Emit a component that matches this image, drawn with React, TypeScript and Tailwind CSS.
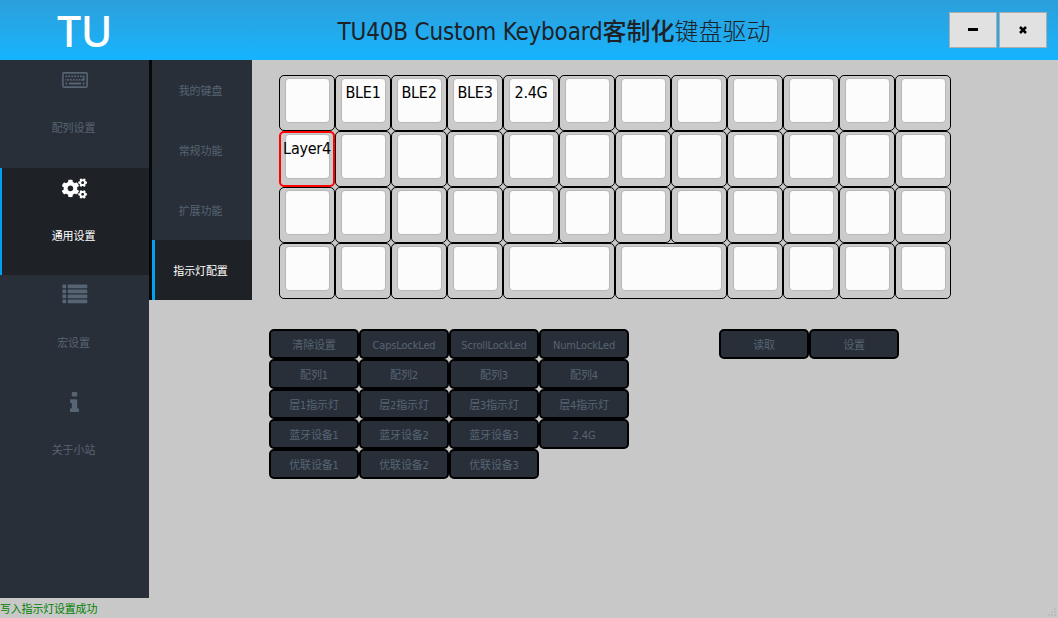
import type { ReactNode } from "react";
import { FaCogs } from "react-icons/fa";

const latin = "font-['DejaVu_Sans_Condensed','DejaVu_Sans','Noto_Sans_CJK_SC',sans-serif] [font-stretch:condensed]";

function KeyboardIcon() {
  return (
    <svg width="26" height="16" viewBox="0 0 26 16" fill="currentColor">
      <rect x="0.9" y="0.9" width="24.2" height="14.2" rx="1" fill="none" stroke="currentColor" strokeWidth="1.6" />
      {[3.5, 6.4, 9.3, 12.2, 15.1, 18].map((x) => (
        <rect key={x} x={x} y="3.4" width="1.8" height="1.8" />
      ))}
      {[5, 7.9, 10.8, 13.7, 16.6].map((x) => (
        <rect key={x} x={x} y="6.9" width="1.8" height="1.8" />
      ))}
      <path d="M20.7 3.4h1.8v5.3h-3.3V6.9h1.5zM3.5 6.9h.9v1.8h-.9zM3.5 10.6h1.8v1.8H3.5zM7 10.6h12v1.8H7zM20.7 10.6h1.8v1.8h-1.8z" />
    </svg>
  );
}

function ListIcon() {
  return (
    <svg width="26" height="20" viewBox="0 0 26 20" fill="currentColor" className="mb-0.5">
      {[0.4, 5.4, 10.4, 15.4].map((y) => (
        <g key={y}>
          <rect x="0.4" y={y} width="3.8" height="3.8" rx="0.6" />
          <rect x="5.7" y={y} width="19.6" height="3.8" rx="0.6" />
        </g>
      ))}
    </svg>
  );
}

function InfoIcon() {
  return (
    <svg width="9" height="20" viewBox="0 128 640 1408" fill="currentColor">
      <path d="M640 1344v128q0 26-19 45t-45 19h-512q-26 0-45-19t-19-45v-128q0-26 19-45t45-19h64v-384h-64q-26 0-45-19t-19-45v-128q0-26 19-45t45-19h384q26 0 45 19t19 45v576h64q26 0 45 19t19 45zM512 192v192q0 26-19 45t-45 19h-256q-26 0-45-19t-19-45v-192q0-26 19-45t45-19h256q26 0 45 19t19 45z" />
    </svg>
  );
}

function NavItem({ icon, label, active, size }: { icon: ReactNode; label: string; active?: boolean; size: string }) {
  return (
    <div
      className={`flex flex-col items-center ${size} ${
        active ? "border-l-2 border-[#00a2f2] bg-[#1e2126] pr-1 text-white" : "bg-[#292f39] pr-0.5 text-[#566473]"
      }`}
    >
      <div className="ml-0.5 flex h-10 items-center">{icon}</div>
      <div className="mt-[21px] h-4 text-[11px] leading-4 tracking-[-0.1px]">{label}</div>
    </div>
  );
}

function SubItem({ label, active }: { label: string; active?: boolean }) {
  return (
    <div
      className={`flex h-15 items-center justify-center border-l-3 pt-1 pr-1.5 text-[11px] tracking-[-0.1px] ${
        active ? "border-[#00a2f2] bg-[#1e2126] text-white" : "border-[#292f39] bg-[#292f39] text-[#566473]"
      }`}
    >
      {label}
    </div>
  );
}

type KeyDef = { label?: string; wide?: boolean; selected?: boolean };

const rows: KeyDef[][] = [
  [{}, { label: "BLE1" }, { label: "BLE2" }, { label: "BLE3" }, { label: "2.4G" }, {}, {}, {}, {}, {}, {}, {}],
  [{ label: "Layer4", selected: true }, {}, {}, {}, {}, {}, {}, {}, {}, {}, {}, {}],
  [{}, {}, {}, {}, {}, {}, {}, {}, {}, {}, {}, {}],
  [{}, {}, {}, {}, { wide: true }, { wide: true }, {}, {}, {}, {}],
];

function Key({ label, wide, selected }: KeyDef) {
  return (
    <div
      className={`relative h-14 rounded-[5px] bg-[#cbcbcb] ${wide ? "col-span-2" : ""} ${
        selected ? "border-2 border-[#ff0000] pt-px pr-[3px] pl-1" : "border border-black pt-0.5 pr-1 pl-[5px]"
      }`}
    >
      <div className="h-[45px] rounded-[4px] border border-[#b8b8b8] bg-[#fcfcfc]" />
      {label && (
        <span
          className={`absolute inset-x-0 flex justify-center text-base leading-5 tracking-[-0.25px] whitespace-nowrap text-black ${
            selected ? "top-1.5" : "top-[7px]"
          }`}
        >
          {label}
        </span>
      )}
    </div>
  );
}

const commands = [
  "清除设置", "CapsLockLed", "ScrollLockLed", "NumLockLed",
  "配列1", "配列2", "配列3", "配列4",
  "层1指示灯", "层2指示灯", "层3指示灯", "层4指示灯",
  "蓝牙设备1", "蓝牙设备2", "蓝牙设备3", "2.4G",
  "优联设备1", "优联设备2", "优联设备3",
];

function Command({ label }: { label: string }) {
  return (
    <button className="flex h-[30px] w-[90px] items-center justify-center rounded-[5px] border-2 border-black bg-[#292f39] pt-1 text-[11px] tracking-[-0.15px] whitespace-nowrap text-[#566473]">
      {label}
    </button>
  );
}

export default function App() {
  return (
    <div className={`flex h-[618px] w-[1058px] flex-col overflow-hidden bg-[#c8c8c8] ${latin}`}>
      <header className="flex h-15 shrink-0 items-center bg-linear-to-b from-[#2b9fda] to-[#14b4ff]">
        <div className="w-[167px] pl-0.5 text-center font-['Noto_Sans',sans-serif] text-[43px] leading-none font-medium tracking-[-0.5px] text-white">
          TU
        </div>
        <h1 className="flex flex-1 items-center justify-center pt-1 pr-2 text-2xl leading-8 whitespace-nowrap text-[#1e2126]">
          <span className="tracking-[-0.2px]">TU40B Custom Keyboard</span>
          <span className="pb-1 font-['Noto_Sans_CJK_SC',sans-serif] font-medium">客制化</span>
          <span className="pb-1 font-['Noto_Sans_CJK_SC',sans-serif] font-light">键盘驱动</span>
        </h1>
        <div className="flex gap-0.5 pr-[11px]">
          <button className="flex h-9 w-12 items-center justify-center border border-[#adadad] bg-[#e1e1e1]">
            <svg width="10" height="3" className="mb-0.5"><rect width="10" height="3" /></svg>
          </button>
          <button className="flex h-9 w-12 items-center justify-center border border-[#adadad] bg-[#e1e1e1]">
            <svg width="8" height="8" viewBox="0 0 8 8"><path d="M1 1l6 6M7 1L1 7" stroke="black" strokeWidth="2.5" /></svg>
          </button>
        </div>
      </header>
      <div className="flex min-h-0 flex-1">
        <nav className="flex w-[149px] flex-col bg-[#292f39]">
          <NavItem size="h-[108px]" icon={<KeyboardIcon />} label="配列设置" />
          <NavItem size="h-[107px]" icon={<FaCogs size={25} />} label="通用设置" active />
          <NavItem size="h-[107px]" icon={<ListIcon />} label="宏设置" />
          <NavItem size="h-[108px]" icon={<InfoIcon />} label="关于小站" />
        </nav>
        <nav className="h-60 w-[103px] border-l-3 border-[#07080a]">
          <SubItem label="我的键盘" />
          <SubItem label="常规功能" />
          <SubItem label="扩展功能" />
          <SubItem label="指示灯配置" active />
        </nav>
        <main className="flex-1 pt-[15px] pl-[17px]">
          <div className="ml-2.5 grid w-[672px] grid-cols-12">
            {rows.flat().map((k, i) => (
              <Key key={i} {...k} />
            ))}
          </div>
          <div className="mt-[30px] flex items-start gap-[90px]">
            <div className="grid w-[360px] grid-cols-4">
              {commands.map((c) => (
                <Command key={c} label={c} />
              ))}
            </div>
            <div className="flex">
              <Command label="读取" />
              <Command label="设置" />
            </div>
          </div>
        </main>
      </div>
      <footer className="flex h-5 shrink-0 items-end justify-between">
        <span className="h-5 text-[11px] leading-6 tracking-[-0.2px] text-[#008000]">写入指示灯设置成功</span>
        <svg width="10" height="10" viewBox="0 0 10 10" fill="#bcbcbc">
          <path d="M6 0h2v2H6zM3 3h2v2H3zM6 3h2v2H6zM0 6h2v2H0zM3 6h2v2H3zM6 6h2v2H6z" />
        </svg>
      </footer>
    </div>
  );
}
